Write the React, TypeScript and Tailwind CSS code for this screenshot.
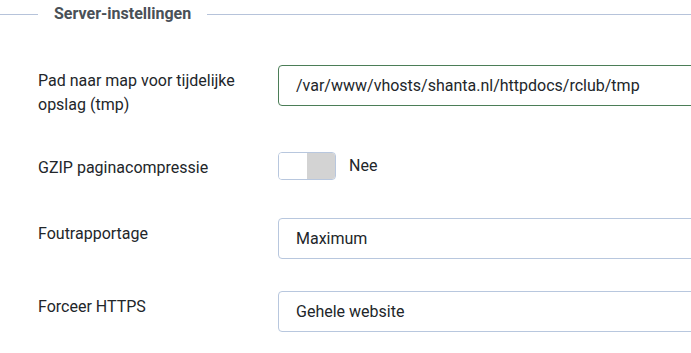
export default function App() {
  return (
    <div className="h-[353px] w-[691px] overflow-hidden bg-white font-['Roboto',sans-serif] text-[16px] text-[#22262a]">
      {/* legend */}
      <div className="flex h-[28px] items-center">
        <div className="h-px w-[38px] bg-[#b6c3da]" />
        <div className="px-[16px] text-[16px] font-bold leading-[28px] text-[#495057]">Server-instellingen</div>
        <div className="h-px flex-1 bg-[#b6c3da]" />
      </div>

      <div className="pt-[37px]">
        {/* tmp path */}
        <div className="mb-[35px] flex items-start">
          <label className="w-[278px] shrink-0 pl-[38px] pr-[20px] pt-[4px] leading-[24px]">
            Pad naar map voor tijdelijke opslag (tmp)
          </label>
          <div className="flex h-[41px] w-[500px] shrink-0 items-center rounded-[4px] border border-[#4b7d57] pl-[17px]">
            /var/www/vhosts/shanta.nl/httpdocs/rclub/tmp
          </div>
        </div>

        {/* gzip */}
        <div className="mb-[38px] flex items-start">
          <label className="w-[278px] shrink-0 pl-[38px] pt-[4px] leading-[24px]">GZIP paginacompressie</label>
          <div className="flex items-center">
            <div className="flex h-[28px] w-[58px] overflow-hidden rounded-[4px] border border-[#b8c7de]">
              <div className="flex-1 bg-white" />
              <div className="flex-1 bg-[#d3d3d3]" />
            </div>
            <span className="ml-[13px] leading-[24px]">Nee</span>
          </div>
        </div>

        {/* error reporting */}
        <div className="mb-[32px] flex items-start">
          <label className="w-[278px] shrink-0 pl-[38px] pt-[4px] leading-[24px]">Foutrapportage</label>
          <div className="flex h-[41px] w-[500px] shrink-0 items-center rounded-[4px] border border-[#b8c7de] pl-[17px]">
            Maximum
          </div>
        </div>

        {/* https */}
        <div className="flex items-start">
          <label className="w-[278px] shrink-0 pl-[38px] pt-[4px] leading-[24px]">Forceer HTTPS</label>
          <div className="flex h-[41px] w-[500px] shrink-0 items-center rounded-[4px] border border-[#b8c7de] pl-[17px]">
            Gehele website
          </div>
        </div>
      </div>
    </div>
  )
}
